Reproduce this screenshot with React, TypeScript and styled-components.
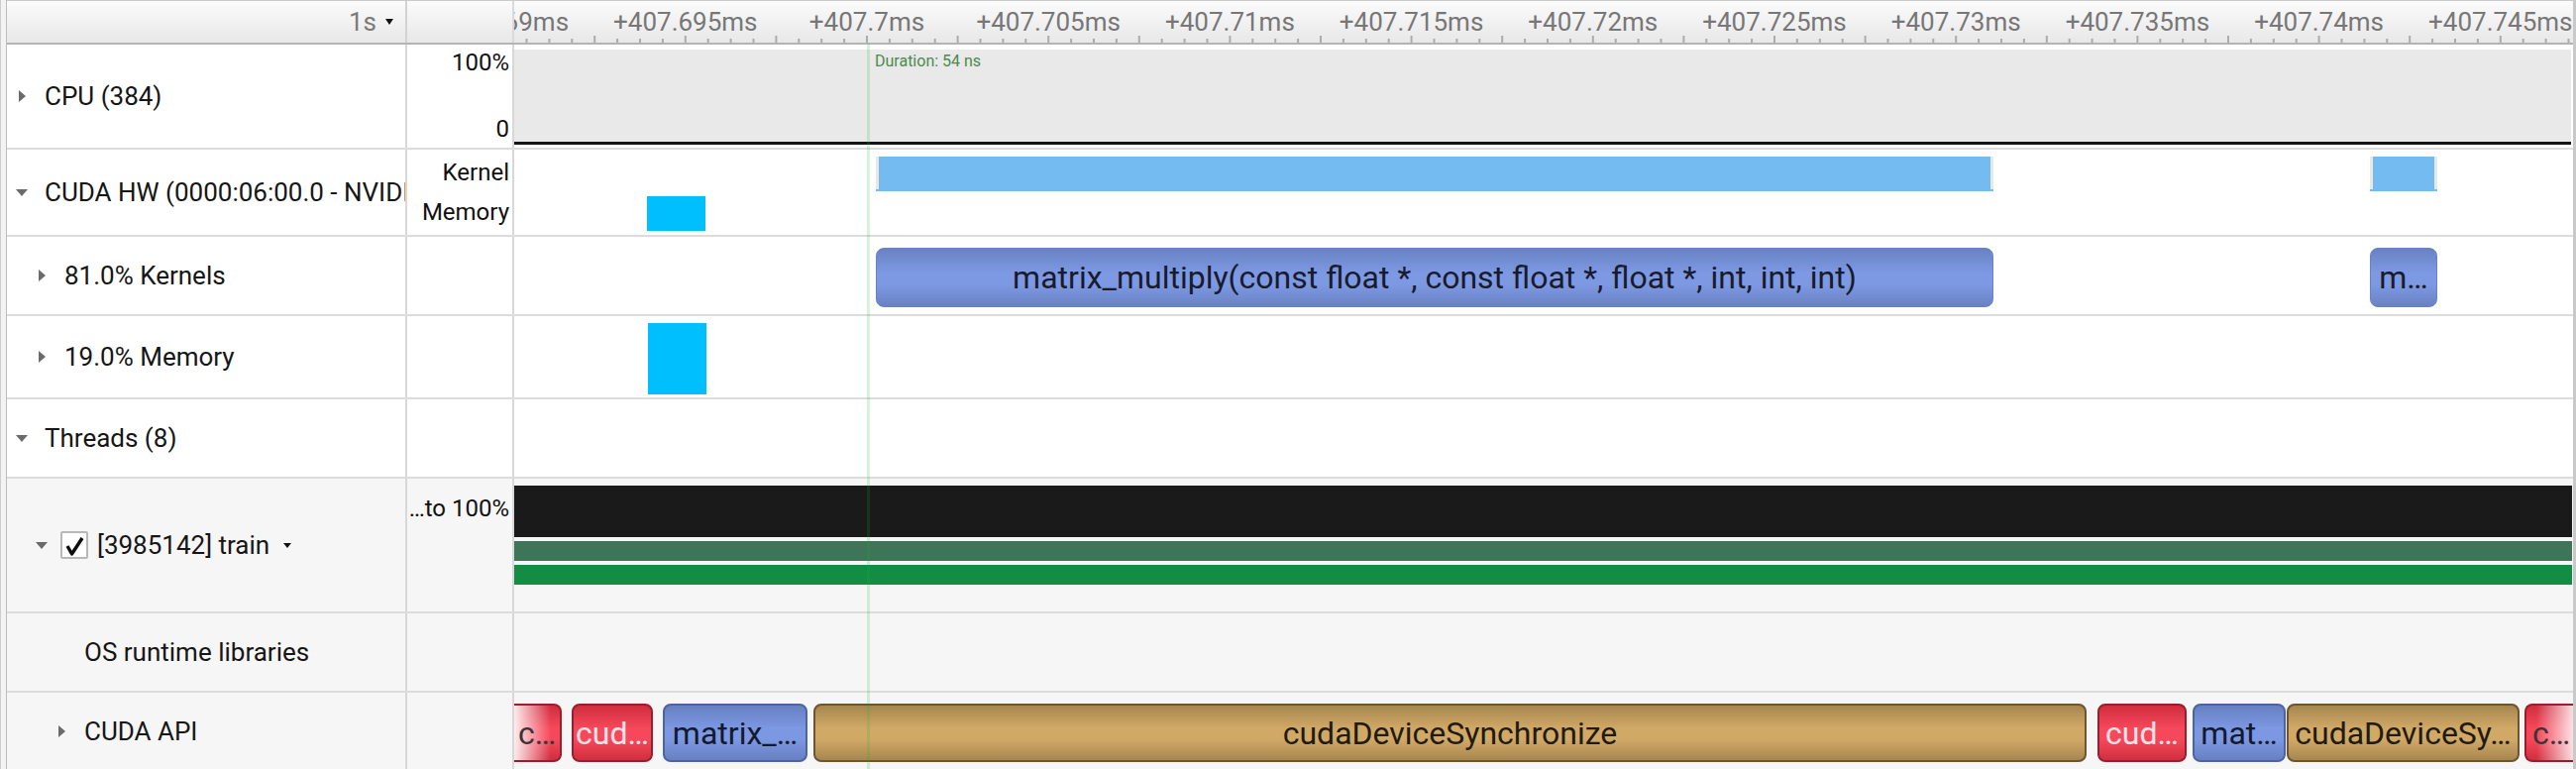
import styled, { createGlobalStyle, css } from "styled-components";

const GlobalStyle = createGlobalStyle`
  html, body {
    margin: 0;
    padding: 0;
    background: #ffffff;
  }
  body {
    font-family: Roboto, "Liberation Sans", Arial, sans-serif;
  }
`;

// timeline geometry (page px)
const TRACK_X = 519;
const TRACK_W = 2078;
const CURSOR_X = 875; // +407.7ms
const MAJOR = 91.6;

type Kind = "kernel" | "blue" | "red" | "tan";

interface SliceEvent {
  x0: number;
  x1: number;
  label: string;
  kind: Kind;
  fade?: "left" | "right";
}

interface Block {
  x0: number;
  x1: number;
  top: number;
  h: number;
  color: string;
  edge?: boolean;
}

const palette: Record<Kind, { dark: string; mid: string; border: string; text: string }> = {
  kernel: { dark: "#6a82c3", mid: "#7d99e3", border: "#6a83c5", text: "#181b2c" },
  blue: { dark: "#6780c2", mid: "#7c98e2", border: "#4d64a3", text: "#141a2e" },
  red: { dark: "#d02e3e", mid: "#f6485b", border: "#9a1f2e", text: "#ffe2e7" },
  tan: { dark: "#a6864f", mid: "#d1a967", border: "#6e5530", text: "#221b0d" },
};

const hwBlocks: Block[] = [
  { x0: 884, x1: 2012, top: 7, h: 35, color: "#74bbf2", edge: true },
  { x0: 2392, x1: 2460, top: 7, h: 35, color: "#74bbf2", edge: true },
  { x0: 653, x1: 712, top: 47, h: 35, color: "#00bfff" },
];

const memBlocks: Block[] = [{ x0: 654, x1: 713, top: 7, h: 72, color: "#00bfff" }];

const kernelEvents: SliceEvent[] = [
  {
    x0: 884,
    x1: 2012,
    label: "matrix_multiply(const float *, const float *, float *, int, int, int)",
    kind: "kernel",
  },
  { x0: 2392, x1: 2460, label: "m…", kind: "kernel" },
];

const apiEvents: SliceEvent[] = [
  { x0: 519, x1: 567, label: "c…", kind: "red", fade: "left" },
  { x0: 577, x1: 659, label: "cud…", kind: "red" },
  { x0: 669, x1: 815, label: "matrix_…", kind: "blue" },
  { x0: 821, x1: 2106, label: "cudaDeviceSynchronize", kind: "tan" },
  { x0: 2117, x1: 2207, label: "cud…", kind: "red" },
  { x0: 2213, x1: 2307, label: "mat…", kind: "blue" },
  { x0: 2308, x1: 2543, label: "cudaDeviceSy…", kind: "tan" },
  { x0: 2548, x1: 2600, label: "c…", kind: "red", fade: "right" },
];

const rulerLabels = Array.from({ length: 12 }, (_, k) => ({
  text: "+" + Number(((407690 + k * 5) / 1000).toFixed(3)) + "ms",
  x: CURSOR_X - 2 * MAJOR * 2 + k * 2 * MAJOR - TRACK_X,
}));

const ticks: { x: number; major: boolean }[] = [];
for (let j = -20; j <= 80; j++) {
  const x = CURSOR_X - TRACK_X + j * (MAJOR / 4);
  if (x < 0 || x > TRACK_W) continue;
  ticks.push({ x, major: j % 4 === 0 });
}

const App = () => {
  return (
    <>
      <GlobalStyle />
      <Frame>
        <Gutter />
        <Table>
          <HeaderRow>
            <HeaderLabel>
              1s
              <Caret />
            </HeaderLabel>
            <HeaderAxis />
            <Ruler>
              {rulerLabels.map((l) => (
                <RulerText key={l.text} style={{ left: l.x }}>
                  {l.text}
                </RulerText>
              ))}
              <TickSvg width={TRACK_W} height={9}>
                {ticks.map((t) => (
                  <line
                    key={t.x}
                    x1={t.x}
                    x2={t.x}
                    y1={t.major ? 2 : 5}
                    y2={9}
                    stroke="#ababab"
                    strokeWidth={2}
                  />
                ))}
              </TickSvg>
            </Ruler>
          </HeaderRow>

          <Row $h={106}>
            <Label $depth={0}>
              <Toggle $open={false} />
              CPU (384)
            </Label>
            <Axis $top={3} $bottom={4} $spread>
              <AxisText>100%</AxisText>
              <AxisText>0</AxisText>
            </Axis>
            <CpuTrack>
              <CpuFill />
            </CpuTrack>
          </Row>

          <Row $h={88}>
            <Label $depth={0}>
              <Toggle $open />
              CUDA HW (0000:06:00.0 - NVIDIA A100-SXM4-80GB)
            </Label>
            <Axis $top={3}>
              <AxisText $lh={40}>Kernel</AxisText>
              <AxisText $lh={40}>Memory</AxisText>
            </Axis>
            <Track>
              {hwBlocks.map((b) => (
                <FlatBlock
                  key={b.x0 + "-" + b.top}
                  $color={b.color}
                  $edge={b.edge}
                  style={{ left: b.x0 - TRACK_X, width: b.x1 - b.x0, top: b.top, height: b.h }}
                />
              ))}
            </Track>
          </Row>

          <Row $h={80}>
            <Label $depth={1}>
              <Toggle $open={false} />
              81.0% Kernels
            </Label>
            <Axis />
            <Track>
              {kernelEvents.map((e) => (
                <Slice
                  key={e.x0}
                  $kind={e.kind}
                  $thin
                  style={{ left: e.x0 - TRACK_X, width: e.x1 - e.x0, top: 11, height: 60 }}
                >
                  {e.label}
                </Slice>
              ))}
            </Track>
          </Row>

          <Row $h={84}>
            <Label $depth={1}>
              <Toggle $open={false} />
              19.0% Memory
            </Label>
            <Axis />
            <Track>
              {memBlocks.map((b) => (
                <FlatBlock
                  key={b.x0}
                  $color={b.color}
                  style={{ left: b.x0 - TRACK_X, width: b.x1 - b.x0, top: b.top, height: b.h }}
                />
              ))}
            </Track>
          </Row>

          <Row $h={80}>
            <Label $depth={0}>
              <Toggle $open />
              Threads (8)
            </Label>
            <Axis />
            <Track />
          </Row>

          <Row $h={136} $shade>
            <Label $depth={1}>
              <Toggle $open />
              <Check>
                <svg width="23" height="23" viewBox="0 0 23 23">
                  <polyline
                    points="4,12 8.5,20 19,4"
                    fill="none"
                    stroke="#0d0d0d"
                    strokeWidth="3.4"
                    strokeLinejoin="round"
                  />
                </svg>
              </Check>
              [3985142] train
              <Caret $gap={14} $small />
            </Label>
            <Axis $top={15}>
              <AxisText>…to 100%</AxisText>
            </Axis>
            <ThreadTrack>
              <Lane $color="#1a1a1a" $h={52} />
              <Lane $color="#3e7457" $h={20} />
              <Lane $color="#138d44" $h={20} />
            </ThreadTrack>
          </Row>

          <Row $h={80} $shade>
            <Label $depth={2}>
              <ToggleSpacer />
              OS runtime libraries
            </Label>
            <Axis />
            <Track />
          </Row>

          <Row $h={80} $shade>
            <Label $depth={2}>
              <Toggle $open={false} />
              CUDA API
            </Label>
            <Axis />
            <Track>
              {apiEvents.map((e) => (
                <Slice
                  key={e.x0}
                  $kind={e.kind}
                  $fade={e.fade}
                  style={{ left: e.x0 - TRACK_X, width: e.x1 - e.x0, top: 11, height: 59 }}
                >
                  {e.label}
                </Slice>
              ))}
            </Track>
          </Row>
        </Table>

        <Cursor style={{ left: CURSOR_X - 1 }} />
        <DurationTag style={{ left: CURSOR_X + 7 }}>Duration: 54 ns</DurationTag>
      </Frame>
    </>
  );
};

export default App;

const Frame = styled.div`
  position: relative;
  display: flex;
  width: 2600px;
  height: 776px;
  overflow: hidden;
  box-sizing: border-box;
  background: #ffffff;
  border-left: 1px solid #cdcdcd;
  border-right: 3px solid #c9c9c9;
`;

const Gutter = styled.div`
  flex: 0 0 5px;
  background: #f3f3f3;
  border-right: 1px solid #bdbdbd;
`;

const Table = styled.div`
  flex: 1;
  min-width: 0;
  display: flex;
  flex-direction: column;
`;

const HeaderRow = styled.div`
  flex: 0 0 45px;
  display: flex;
  box-sizing: border-box;
  border-top: 1px solid #cbcbcb;
  border-bottom: 2px solid #b4b4b4;
  background: linear-gradient(#fbfbfb, #e8e8e8);
`;

const HeaderLabel = styled.div`
  flex: 0 0 404px;
  box-sizing: border-box;
  display: flex;
  align-items: center;
  justify-content: flex-end;
  padding-right: 12px;
  border-right: 2px solid #d2d2d2;
  color: #7a7a7a;
  font-size: 26px;
`;

const HeaderAxis = styled.div`
  flex: 0 0 108px;
  box-sizing: border-box;
  border-right: 2px solid #dadada;
`;

const Ruler = styled.div`
  position: relative;
  flex: 1;
  overflow: hidden;
`;

const RulerText = styled.span`
  position: absolute;
  top: 6px;
  transform: translateX(-50%);
  font-size: 26px;
  line-height: 30px;
  color: #777777;
  white-space: nowrap;
`;

const TickSvg = styled.svg`
  position: absolute;
  left: 0;
  bottom: 0;
  display: block;
`;

const Caret = styled.span<{ $gap?: number; $small?: boolean }>`
  display: inline-block;
  width: 0;
  height: 0;
  margin-left: ${(p) => p.$gap ?? 9}px;
  border-left: ${(p) => (p.$small ? 4 : 4.5)}px solid transparent;
  border-right: ${(p) => (p.$small ? 4 : 4.5)}px solid transparent;
  border-top: ${(p) => (p.$small ? 5 : 6)}px solid #111111;
`;

const Row = styled.div<{ $h: number; $shade?: boolean }>`
  flex: 0 0 ${(p) => p.$h}px;
  display: flex;
  box-sizing: border-box;
  border-bottom: 2px solid #dcdcdc;
  background: ${(p) => (p.$shade ? "#f6f6f6" : "#ffffff")};
`;

const Label = styled.div<{ $depth: number }>`
  flex: 0 0 404px;
  box-sizing: border-box;
  display: flex;
  align-items: center;
  padding-left: ${(p) => 7 + p.$depth * 20}px;
  border-right: 2px solid #d8d8d8;
  font-size: 26px;
  color: #161616;
  white-space: nowrap;
  overflow: hidden;
`;

const Toggle = styled.span<{ $open: boolean }>`
  flex: 0 0 16px;
  height: 16px;
  margin-right: 15px;
  display: flex;
  align-items: center;
  justify-content: center;

  &::before {
    content: "";
    width: 0;
    height: 0;
    ${(p) =>
      p.$open
        ? css`
            border-left: 6.5px solid transparent;
            border-right: 6.5px solid transparent;
            border-top: 7px solid #6b6b6b;
          `
        : css`
            border-top: 6.5px solid transparent;
            border-bottom: 6.5px solid transparent;
            border-left: 7px solid #6b6b6b;
          `}
  }
`;

const ToggleSpacer = styled.span`
  flex: 0 0 16px;
  margin-right: 15px;
`;

const Check = styled.span`
  flex: 0 0 28px;
  height: 28px;
  box-sizing: border-box;
  margin: 0 9px 0 -4px;
  display: flex;
  align-items: center;
  justify-content: center;
  border: 2px solid #b8b8b8;
  border-radius: 2px;
  background: #ffffff;
`;

const Axis = styled.div<{ $top?: number; $bottom?: number; $spread?: boolean }>`
  flex: 0 0 108px;
  box-sizing: border-box;
  display: flex;
  flex-direction: column;
  align-items: flex-end;
  justify-content: ${(p) => (p.$spread ? "space-between" : "flex-start")};
  padding: ${(p) => p.$top ?? 0}px 3px ${(p) => p.$bottom ?? 0}px 0;
  border-right: 2px solid #d8d8d8;
  font-size: 24px;
  color: #111111;
  white-space: nowrap;
  overflow: hidden;
`;

const AxisText = styled.span<{ $lh?: number }>`
  line-height: ${(p) => p.$lh ?? 30}px;
`;

const Track = styled.div`
  position: relative;
  flex: 1;
  overflow: hidden;
`;

const CpuTrack = styled.div`
  flex: 1;
  padding: 5px 2px 0 0;
`;

const CpuFill = styled.div`
  height: 93px;
  background: #e9e9e9;
  border-bottom: 3px solid #141414;
`;

const ThreadTrack = styled.div`
  flex: 1;
  display: flex;
  flex-direction: column;
  gap: 4px;
  padding: 7px 1px 0 0;
`;

const Lane = styled.div<{ $color: string; $h: number }>`
  height: ${(p) => p.$h}px;
  background: ${(p) => p.$color};
`;

const FlatBlock = styled.div<{ $color: string; $edge?: boolean }>`
  position: absolute;
  background: ${(p) => p.$color};

  ${(p) =>
    p.$edge &&
    css`
      &::before,
      &::after {
        content: "";
        position: absolute;
        top: 0;
        bottom: 2px;
        width: 3px;
        background: #e8e8e8;
      }
      &::before {
        left: 0;
      }
      &::after {
        right: 0;
      }
    `}
`;

const Slice = styled.div<{ $kind: Kind; $thin?: boolean; $fade?: "left" | "right" }>`
  position: absolute;
  box-sizing: border-box;
  display: flex;
  align-items: center;
  justify-content: center;
  overflow: hidden;
  white-space: nowrap;
  font-size: 32px;
  border-radius: 8px;
  border: ${(p) => (p.$thin ? 1 : 2)}px solid ${(p) => palette[p.$kind].border};
  color: ${(p) => palette[p.$kind].text};
  background: linear-gradient(
    ${(p) => palette[p.$kind].dark} 0%,
    ${(p) => palette[p.$kind].mid} 42%,
    ${(p) => palette[p.$kind].mid} 62%,
    ${(p) => palette[p.$kind].dark} 100%
  );

  ${(p) =>
    p.$fade &&
    css`
      color: #3b3434;
      border-${p.$fade}: none;
      border-top-${p.$fade}-radius: 0;
      border-bottom-${p.$fade}-radius: 0;
      background: linear-gradient(
          to ${p.$fade === "left" ? "right" : "left"},
          rgba(255, 255, 255, 0.9) 0%,
          rgba(255, 255, 255, 0) 80%
        ),
        linear-gradient(
          ${palette[p.$kind].dark} 0%,
          ${palette[p.$kind].mid} 42%,
          ${palette[p.$kind].mid} 62%,
          ${palette[p.$kind].dark} 100%
        );
    `}
`;

const Cursor = styled.div`
  position: absolute;
  top: 44px;
  bottom: 0;
  width: 3px;
  background: rgba(20, 190, 40, 0.17);
  pointer-events: none;
`;

const DurationTag = styled.span`
  position: absolute;
  top: 52px;
  font-size: 16px;
  line-height: 20px;
  color: #4b8b4e;
  white-space: nowrap;
`;
